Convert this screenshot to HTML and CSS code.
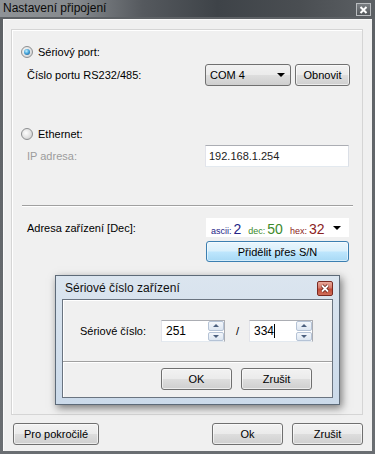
FILE: index.html
```html
<!DOCTYPE html>
<html lang="cs">
<head>
<meta charset="utf-8">
<title>Nastavení připojení</title>
<link rel="stylesheet" href="styles.css">
</head>
<body>
<div class="window">
  <div class="titlebar">
    <span class="title">Nastavení připojení</span>
    <span class="close-btn">
      <svg width="9" height="8" viewBox="0 0 9 8"><path d="M1.5 1 L7.5 7 M7.5 1 L1.5 7" stroke="#ffffff" stroke-width="2"/></svg>
    </span>
  </div>
  <div class="client">
    <div class="panel">
      <div class="radio-row serial"><span class="radio on"></span><span>Sériový port:</span></div>
      <div class="field-row">
        <span class="label">Číslo portu RS232/485:</span>
        <div class="controls">
          <div class="combo"><span>COM 4</span><span class="arrow"></span></div>
          <button class="btn obnovit">Obnovit</button>
        </div>
      </div>
      <div class="radio-row ethernet"><span class="radio"></span><span>Ethernet:</span></div>
      <div class="field-row ip">
        <span class="label disabled">IP adresa:</span>
        <div class="textbox">192.168.1.254</div>
      </div>
      <div class="separator"></div>
      <div class="field-row addr">
        <span class="label">Adresa zařízení [Dec]:</span>
        <div class="addr-combo">
          <span class="k ascii">ascii:</span><span class="v ascii">2</span>
          <span class="k dec">dec:</span><span class="v dec">50</span>
          <span class="k hex">hex:</span><span class="v hex">32</span>
          <span class="arrow"></span>
        </div>
      </div>
      <div class="assign-row"><button class="btn blue">Přidělit přes S/N</button></div>
    </div>
    <div class="footer">
      <button class="btn adv">Pro pokročilé</button>
      <div class="footer-right">
        <button class="btn std">Ok</button>
        <button class="btn std">Zrušit</button>
      </div>
    </div>
  </div>

  <div class="subdialog">
    <div class="sub-title">
      <span>Sériové číslo zařízení</span>
      <span class="sub-close">
        <svg width="10" height="9" viewBox="0 0 10 9"><path d="M2 1.5 L8 7.5 M8 1.5 L2 7.5" stroke="#5a1810" stroke-width="3.2"/><path d="M2 1.5 L8 7.5 M8 1.5 L2 7.5" stroke="#ffffff" stroke-width="1.8"/></svg>
      </span>
    </div>
    <div class="sub-client">
      <div class="sn-row">
        <span class="sn-label">Sériové číslo:</span>
        <div class="spin">
          <span class="spin-text">251</span>
          <div class="spin-btns"><span class="sb up"></span><span class="sb down"></span></div>
        </div>
        <span class="slash">/</span>
        <div class="spin">
          <span class="spin-text">334<span class="caret"></span></span>
          <div class="spin-btns"><span class="sb up"></span><span class="sb down"></span></div>
        </div>
      </div>
      <div class="sub-sep"></div>
      <div class="sub-buttons">
        <button class="btn std">OK</button>
        <button class="btn std">Zrušit</button>
      </div>
    </div>
  </div>
</div>
</body>
</html>
```
FILE: styles.css
```css
* { box-sizing: border-box; }
html, body { margin: 0; padding: 0; }
body {
  width: 375px;
  height: 454px;
  overflow: hidden;
  font-family: "Liberation Sans", Arial, sans-serif;
  font-size: 11px;
  color: #000;
}
.window {
  position: relative;
  width: 375px;
  height: 454px;
  background: linear-gradient(to bottom, #5d6165, #6a6e72);
  padding: 0 3px 3px;
}
.titlebar {
  height: 17px;
  margin: 0 -3px;
  padding: 0 4px 0 3px;
  display: flex;
  align-items: center;
  justify-content: space-between;
  background: linear-gradient(to right, #8e9296 0%, #868a8e 20%, #55595e 38%, #3e4348 58%, #4a4e52 80%, #5c6064 100%);
}
.title {
  font-size: 12px;
  color: #0a0a0a;
  line-height: 17px;
}
.close-btn {
  width: 15px;
  height: 13px;
  margin-top: 2px;
  border: 1px solid #b9bcbf;
  background: linear-gradient(#7a7e82, #53575b);
  display: flex;
  align-items: center;
  justify-content: center;
}
.client {
  margin-top: 2px;
  height: 432px;
  background: #f0f0f0;
  border-top: 1px solid #fbfbfb;
  border-left: 1px solid #fbfbfb;
  overflow: hidden;
}
.panel {
  margin: 9px 0 0 7px;
  width: 352px;
  height: 386px;
  border: 1px solid #d5d5d5;
  box-shadow: inset 1px 1px 0 #ffffff;
  padding: 15px 0 0 15px;
}
.radio-row {
  display: flex;
  align-items: center;
  height: 14px;
  margin-left: -6px;
}
.radio-row .radio { margin-right: 5px; }
.radio-row.ethernet { margin-top: 41px; }
.radio {
  position: relative;
  width: 12px;
  height: 12px;
  border-radius: 50%;
  border: 1px solid #8d8f91;
  background: radial-gradient(circle at 40% 40%, #fdfdfd 0%, #e4e4e4 50%, #c4c4c4 100%);
}
.radio.on::after {
  content: "";
  position: absolute;
  left: 2px;
  top: 2px;
  width: 6px;
  height: 6px;
  border-radius: 50%;
  background: radial-gradient(circle at 40% 35%, #c6f2ff 0%, #49a7dc 45%, #0f4a80 100%);
}
.field-row {
  display: flex;
  align-items: center;
  margin-top: 5px;
  height: 22px;
}
.field-row.ip { margin-top: 4px; }
.label { width: 178px; flex: none; }
.label.disabled { color: #9c9c9c; }
.controls { display: flex; gap: 4px; }
.btn {
  font-family: "Liberation Sans", Arial, sans-serif;
  font-size: 11px;
  color: #000;
  border: 1px solid #707070;
  border-radius: 3px;
  background: linear-gradient(to bottom, #f2f2f2 0%, #ebebeb 48%, #dddddd 52%, #cfcfcf 100%);
  box-shadow: inset 0 0 0 1px rgba(255,255,255,0.6);
  padding: 0;
  height: 22px;
}
.combo {
  width: 86px;
  height: 22px;
  border: 1px solid #707070;
  border-radius: 3px;
  background: linear-gradient(to bottom, #f2f2f2 0%, #ebebeb 48%, #dddddd 52%, #cfcfcf 100%);
  display: flex;
  align-items: center;
  justify-content: space-between;
  padding: 0 5px 0 4px;
}
.arrow {
  width: 0;
  height: 0;
  border-left: 4px solid transparent;
  border-right: 4px solid transparent;
  border-top: 4px solid #000;
}
.obnovit { width: 55px; }
.textbox {
  width: 144px;
  height: 22px;
  border: 1px solid #abadb3;
  border-left-color: #e2e3ea;
  border-right-color: #dbdfe6;
  border-bottom-color: #e3e9ef;
  background: #fff;
  padding: 0 3px;
  display: flex;
  align-items: center;
  color: #222;
}
.separator {
  margin: 38px 9px 0 -5px;
  height: 2px;
  border-top: 1px solid #a0a0a0;
  border-bottom: 1px solid #ffffff;
}
.field-row.addr { margin-top: 10px; height: 21px; }
.addr-combo {
  width: 145px;
  height: 21px;
  background: #fff;
  border: 1px solid #f0f0f0;
  display: flex;
  align-items: baseline;
  padding: 3px 0 0 5px;
}
.addr-combo .k { font-size: 9px; margin-right: 2px; }
.addr-combo .v { font-size: 14px; margin-right: 7px; }
.addr-combo .v.hex { margin-right: 8px; }
.addr-combo .arrow { align-self: center; margin-top: -2px; }
.ascii { color: #242487; }
.dec { color: #3d8a2b; }
.hex { color: #8b2323; }
.assign-row { margin: 3px 0 0 179px; }
.btn.blue {
  width: 143px;
  height: 21px;
  border-color: #3c7fb1;
  background: linear-gradient(to bottom, #eaf6fd 0%, #d9f0fc 48%, #bee6fd 52%, #a7d9f5 100%);
  box-shadow: inset 0 0 0 1px rgba(255,255,255,0.5);
}
.footer {
  display: flex;
  justify-content: space-between;
  margin-top: 8px;
  padding: 0 9px 0 9px;
}
.footer-right { display: flex; gap: 9px; }
.btn.adv { width: 86px; }
.btn.std { width: 71px; }

/* Sub dialog overlay */
.subdialog {
  position: absolute;
  left: 55px;
  top: 275px;
  width: 285px;
  height: 130px;
  border: 1px solid #5d6a78;
  background: linear-gradient(to bottom, #dbe5ef, #cbdaea);
  box-shadow: 2px 3px 8px rgba(0,0,0,0.5);
  padding: 0 6px 6px;
  display: flex;
  flex-direction: column;
}
.sub-title {
  height: 23px;
  display: flex;
  align-items: center;
  justify-content: space-between;
  padding-left: 3px;
  font-size: 12px;
  color: #111;
}
.sub-close {
  width: 16px;
  height: 15px;
  margin-top: 1px;
  border: 1px solid #7a2a22;
  border-radius: 2px;
  background: linear-gradient(to bottom, #e9a99b 0%, #d67a6a 45%, #c24a36 55%, #d0705c 100%);
  display: flex;
  align-items: center;
  justify-content: center;
}
.sub-client {
  flex: 1;
  background: #f0f0f0;
  border: 1px solid #6a7480;
  box-shadow: inset 1px 1px 0 #ffffff;
  padding: 20px 0 0 17px;
}
.sn-row {
  display: flex;
  align-items: center;
  height: 22px;
}
.sn-label { width: 81px; }
.spin {
  width: 64px;
  height: 22px;
  border: 1px solid #abadb3;
  border-left-color: #e2e3ea;
  border-bottom-color: #e3e9ef;
  background: #fff;
  display: flex;
  align-items: center;
  justify-content: space-between;
  padding: 0 0 0 4px;
}
.spin-text {
  font-size: 12px;
  display: flex;
  align-items: center;
}
.caret {
  display: inline-block;
  width: 1px;
  height: 14px;
  background: #000;
}
.spin-btns {
  display: flex;
  flex-direction: column;
  gap: 1px;
  width: 16px;
  height: 20px;
}
.sb {
  flex: 1;
  border: 1px solid #b5c3d6;
  border-radius: 2px;
  background: linear-gradient(to bottom, #f4f7fb, #dde6f1);
  display: flex;
  align-items: center;
  justify-content: center;
}
.sb::after {
  content: "";
  width: 0;
  height: 0;
  border-left: 3px solid transparent;
  border-right: 3px solid transparent;
}
.sb.up::after { border-bottom: 3px solid #4c607e; }
.sb.down::after { border-top: 3px solid #4c607e; }
.slash { width: 24px; padding-left: 11px; }
.sub-sep {
  margin: 19px 0 0 -17px;
  height: 2px;
  border-top: 1px solid #a0a0a0;
  border-bottom: 1px solid #ffffff;
}
.sub-buttons {
  display: flex;
  gap: 9px;
  margin: 5px 0 0 81px;
}
```
